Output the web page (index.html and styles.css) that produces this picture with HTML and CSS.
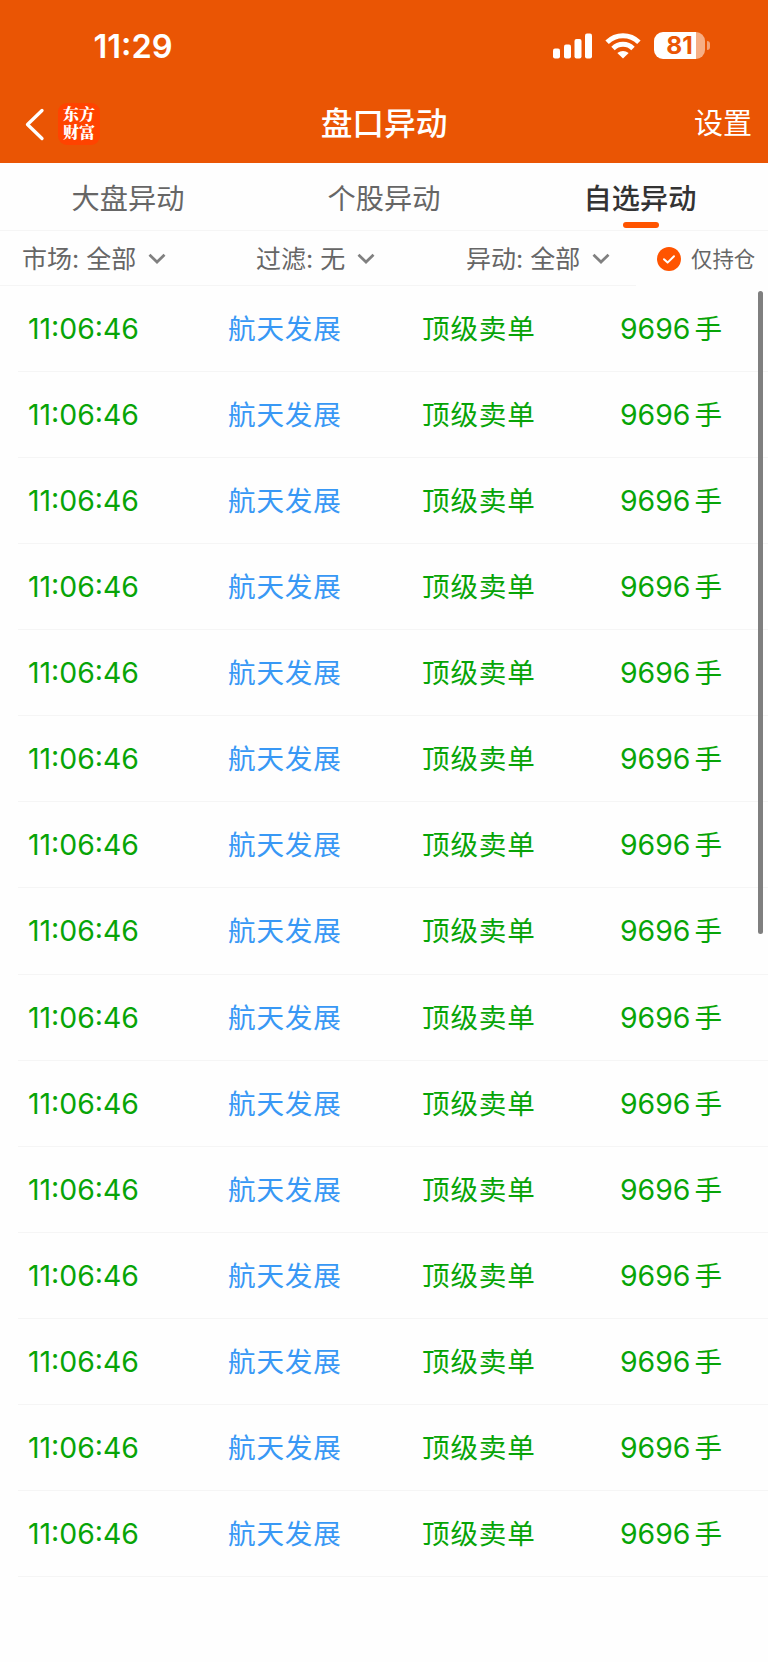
FILE: index.html
```html
<!DOCTYPE html>
<html lang="zh-CN">
<head>
    <meta charset="UTF-8">
    <meta name="viewport" content="width=device-width, initial-scale=1.0">
    <title>盘口异动</title>
    <link rel="stylesheet" href="styles.css">
</head>
<body>

<header class="header">
    <div class="status-bar">
        <span class="clock">11:29</span>
        <div class="status-icons">
            <svg class="signal" width="40" height="26" viewBox="0 0 40 26" fill="#fff">
                <rect x="0" y="15.5" width="7" height="10" rx="2"/>
                <rect x="11" y="11.5" width="7" height="14" rx="2"/>
                <rect x="21.5" y="6" width="7" height="19.5" rx="2"/>
                <rect x="32" y="0.5" width="7" height="25" rx="2"/>
            </svg>
            <svg class="wifi" width="36" height="26" viewBox="0 0 36 26" fill="none" stroke="#fff" stroke-width="4.9">
                <path d="M2.1 9.3A22.6 22.6 0 0 1 33.9 9.3"/>
                <path d="M8 15.4A14.3 14.3 0 0 1 28 15.4"/>
                <path d="M12.3 20Q18 15.8 23.7 20L18 25.6Z" fill="#fff" stroke="none"/>
            </svg>
            <div class="battery"><span>81</span></div>
            <i class="battery-cap"></i>
        </div>
    </div>
    <div class="nav-bar">
        <div class="nav-left">
            <svg width="20" height="34" viewBox="0 0 20 34" fill="none" stroke="#fff" stroke-width="3.3" stroke-linecap="round" stroke-linejoin="round">
                <path d="M17 3.5L2.5 17.5L17 31.5"/>
            </svg>
            <div class="logo"><span>东方</span><span>财富</span></div>
        </div>
        <h1>盘口异动</h1>
        <a class="setting">设置</a>
    </div>
</header>

<nav class="tabs">
    <a class="tab">大盘异动</a>
    <a class="tab">个股异动</a>
    <a class="tab active">自选异动</a>
</nav>

<div class="filters">
    <div class="filter market">
        <span>市场: 全部</span>
        <svg class="arrow" viewBox="0 0 18 12"><path d="M1.5 1.8L9 9L16.5 1.8"/></svg>
    </div>
    <div class="filter screen">
        <span>过滤: 无</span>
        <svg class="arrow" viewBox="0 0 18 12"><path d="M1.5 1.8L9 9L16.5 1.8"/></svg>
    </div>
    <div class="filter change">
        <span>异动: 全部</span>
        <svg class="arrow" viewBox="0 0 18 12"><path d="M1.5 1.8L9 9L16.5 1.8"/></svg>
    </div>
    <div class="hold">
        <svg width="24" height="24" viewBox="0 0 24 24">
            <circle cx="12" cy="12" r="12" fill="#ff5400"/>
            <path d="M7 12.2L10.6 15.6L17 9.2" fill="none" stroke="#fff" stroke-width="2" stroke-linecap="round" stroke-linejoin="round"/>
        </svg>
        <span>仅持仓</span>
    </div>
</div>

<main class="list-wrap">
    <div id="list"></div>
    <div class="scrollbar"></div>
</main>

<script>
    const list = document.getElementById("list");
    const data = Array(15).fill({ time: "11:06:46", name: "航天发展", type: "顶级卖单", amount: "9696" });

    data.forEach(item => {
        const row = document.createElement("div");
        row.className = "row";
        row.innerHTML = `
            <span class="time">${item.time}</span>
            <span class="name">${item.name}</span>
            <span class="type">${item.type}</span>
            <span class="amount">${item.amount}<em>手</em></span>`;
        list.appendChild(row);
    });
</script>
</body>
</html>
```
FILE: styles.css
```css
* {
    box-sizing: border-box;
}

body {
    margin: 0;
    background-color: #fefefe;
    font-family: Inter, "Noto Sans CJK SC", sans-serif;
    color: #666;
    height: 1662px;
    overflow: hidden;
}

.header {
    height: 163.4px;
    background-color: #ea5504;
    color: #fff;
}

.status-bar {
    height: 87px;
    display: flex;
    justify-content: space-between;
    padding: 0 58px 0 93.5px;
}

.clock {
    font-size: 32.6px;
    font-weight: 600;
    line-height: 92px;
}

.status-icons {
    display: flex;
    align-items: center;
    height: 91px;
}

.wifi {
    margin-left: 12px;
}

.battery {
    width: 51px;
    height: 27px;
    margin-left: 13px;
    border-radius: 9px;
    background: linear-gradient(to right, #fff 42px, #f6ae85 42px);
    color: #ea5504;
    font-size: 24.5px;
    font-weight: 700;
    line-height: 27px;
    text-align: center;
}

.battery-cap {
    width: 3px;
    height: 9px;
    margin-left: 2px;
    border-radius: 0 4px 4px 0;
    background-color: #f3a277;
}

.nav-bar {
    height: 73px;
    display: grid;
    grid-template-columns: 1fr auto 1fr;
    align-items: center;
    padding: 0 16px;
}

.nav-left {
    display: flex;
    align-items: center;
    padding-left: 9px;
}

.logo {
    display: flex;
    flex-direction: column;
    width: 42px;
    height: 42px;
    margin-left: 13px;
    padding-top: 2px;
    border-radius: 9px;
    background-color: #ff4300;
    font-family: "Noto Serif CJK SC", "Noto Sans CJK SC", serif;
    font-size: 16px;
    font-weight: 900;
    line-height: 18px;
    text-align: center;
}

h1 {
    margin: 0;
    font-size: 31.7px;
    font-weight: 500;
    line-height: 42px;
}

.setting {
    text-align: right;
    font-size: 29px;
    line-height: 42px;
}

.tabs {
    display: grid;
    grid-template-columns: repeat(3, 1fr);
    height: 67.3px;
    border-bottom: 1px solid #f5f5f5;
}

.tab {
    position: relative;
    text-align: center;
    font-size: 28.2px;
    line-height: 72px;
}

.tab.active {
    color: #333;
    font-weight: 500;
}

.tab.active::after {
    content: "";
    position: absolute;
    left: 50%;
    top: 59px;
    width: 36px;
    height: 5.5px;
    margin-left: -17.5px;
    border-radius: 3px;
    background-color: #ff5400;
}

.filters {
    display: flex;
    height: 55px;
    font-size: 25px;
    line-height: 50px;
}

.filter {
    display: flex;
    align-items: center;
    padding-top: 2px;
    border-bottom: 1px solid #f5f5f5;
    white-space: nowrap;
}

.market {
    width: 256px;
    padding-left: 22px;
}

.screen {
    width: 210px;
}

.change {
    width: 170px;
}

.arrow {
    width: 18px;
    height: 12px;
    margin-left: 11.5px;
    fill: none;
    stroke: #808080;
    stroke-width: 2.8;
}

.hold {
    display: flex;
    align-items: center;
    padding-top: 1px;
    padding-left: 21px;
    font-size: 21.4px;
}

.hold span {
    margin-left: 10px;
}

.list-wrap {
    position: relative;
}

.row {
    display: grid;
    grid-template-columns: 200px 194px 198px 1fr;
    height: 86.12px;
    margin-left: 18px;
    padding-left: 10px;
    border-bottom: 1px solid #f5f5f5;
    font-size: 28.4px;
    line-height: 86px;
    color: #07a407;
    white-space: nowrap;
}

.name,
.type {
    font-size: 27.6px;
    letter-spacing: 0.8px;
}

.name {
    color: #3898f5;
}

.amount em {
    font-style: normal;
    font-size: 27.6px;
    margin-left: 4px;
}

.scrollbar {
    position: absolute;
    top: 5px;
    right: 5.5px;
    width: 5px;
    height: 643px;
    border-radius: 3px;
    background-color: #7f7f7f;
}
```
